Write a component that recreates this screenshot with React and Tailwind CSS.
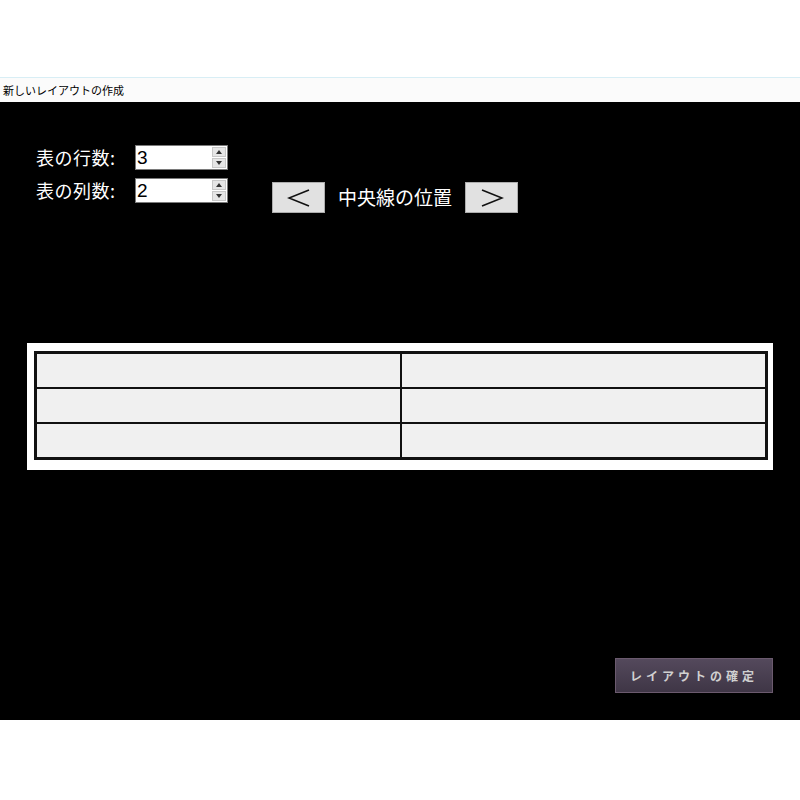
import React, { useState } from 'react'

const font = { fontFamily: '"Noto Sans CJK JP", "Noto Sans", sans-serif' }

const SpinBox = ({ value }) => {
  return (
    <div className="flex h-[25px] w-[93px] border border-[#7a7a7a] bg-white">
      <div className="flex-1 pl-[1px] text-[19px] leading-[23px] text-black" style={{ fontFamily: '"Liberation Sans", Arial, sans-serif' }}>{value}</div>
      <div className="flex w-[15px] flex-col gap-[1px] py-[1px] pr-[1px]">
        <div className="flex flex-1 items-center justify-center bg-[#e6e6e6] border border-[#c8c8c8]">
          <svg width="6" height="4" viewBox="0 0 6 4"><path d="M0 4 L3 0 L6 4 Z" fill="#333" /></svg>
        </div>
        <div className="flex flex-1 items-center justify-center bg-[#e6e6e6] border border-[#c8c8c8]">
          <svg width="6" height="4" viewBox="0 0 6 4"><path d="M0 0 L3 4 L6 0 Z" fill="#333" /></svg>
        </div>
      </div>
    </div>
  )
}

const ArrowBtn = ({ dir }) => (
  <button className="flex h-[31px] w-[53px] items-center justify-center bg-[#e1e1e1] border border-[#adadad]">
    <svg width="24" height="18" viewBox="0 0 24 18">
      {dir === 'left'
        ? <polyline points="22,1 2,9 22,17" fill="none" stroke="#111" strokeWidth="1.6" />
        : <polyline points="2,1 22,9 2,17" fill="none" stroke="#111" strokeWidth="1.6" />}
    </svg>
  </button>
)

const App = () => {
  const [rows] = useState(3)
  const [cols] = useState(2)

  return (
    <div className="flex h-[800px] w-[800px] flex-col bg-white" style={font}>
      <div className="h-[78px] border-b border-[#d8eef5]"></div>
      <div className="flex h-[24px] items-center bg-[#fbfbfb] pl-[3px] text-[11px] text-black">
        新しいレイアウトの作成
      </div>
      <div className="flex h-[618px] flex-col bg-black pl-[27px] pt-[43px]">
        <div className="flex items-start">
          <div className="flex flex-col gap-[8px] pl-[9px]">
            <div className="flex items-center">
              <span className="w-[99px] text-[18px] leading-[25px] tracking-[0.5px] text-white">表の行数:</span>
              <SpinBox value={rows} />
            </div>
            <div className="flex items-center">
              <span className="w-[99px] text-[18px] leading-[25px] tracking-[0.5px] text-white">表の列数:</span>
              <SpinBox value={cols} />
            </div>
          </div>
          <div className="ml-[44px] mt-[37px] flex items-center">
            <ArrowBtn dir="left" />
            <span className="mx-[13px] text-[19px] text-white">中央線の位置</span>
            <ArrowBtn dir="right" />
          </div>
        </div>

        <div className="mt-[130px] w-[746px] bg-white pb-[10px] pl-[7px] pr-[5px] pt-[8px]">
          <div className="grid grid-cols-2 gap-[2px] border-[3px] border-[#111] bg-[#111]">
            {Array.from({ length: rows * cols }).map((_, i) => (
              <div key={i} className="h-[33px] bg-[#f0f0f0]"></div>
            ))}
          </div>
        </div>

        <div className="mt-[188px] flex justify-end pr-[27px]">
          <button className="h-[35px] w-[158px] border border-[#6b5a6e] bg-gradient-to-b from-[#54495c] to-[#3f3646] text-[12px] font-bold tracking-[4px] text-[#d0d0d0]">
            レイアウトの確定
          </button>
        </div>
      </div>
    </div>
  )
}

export default App
